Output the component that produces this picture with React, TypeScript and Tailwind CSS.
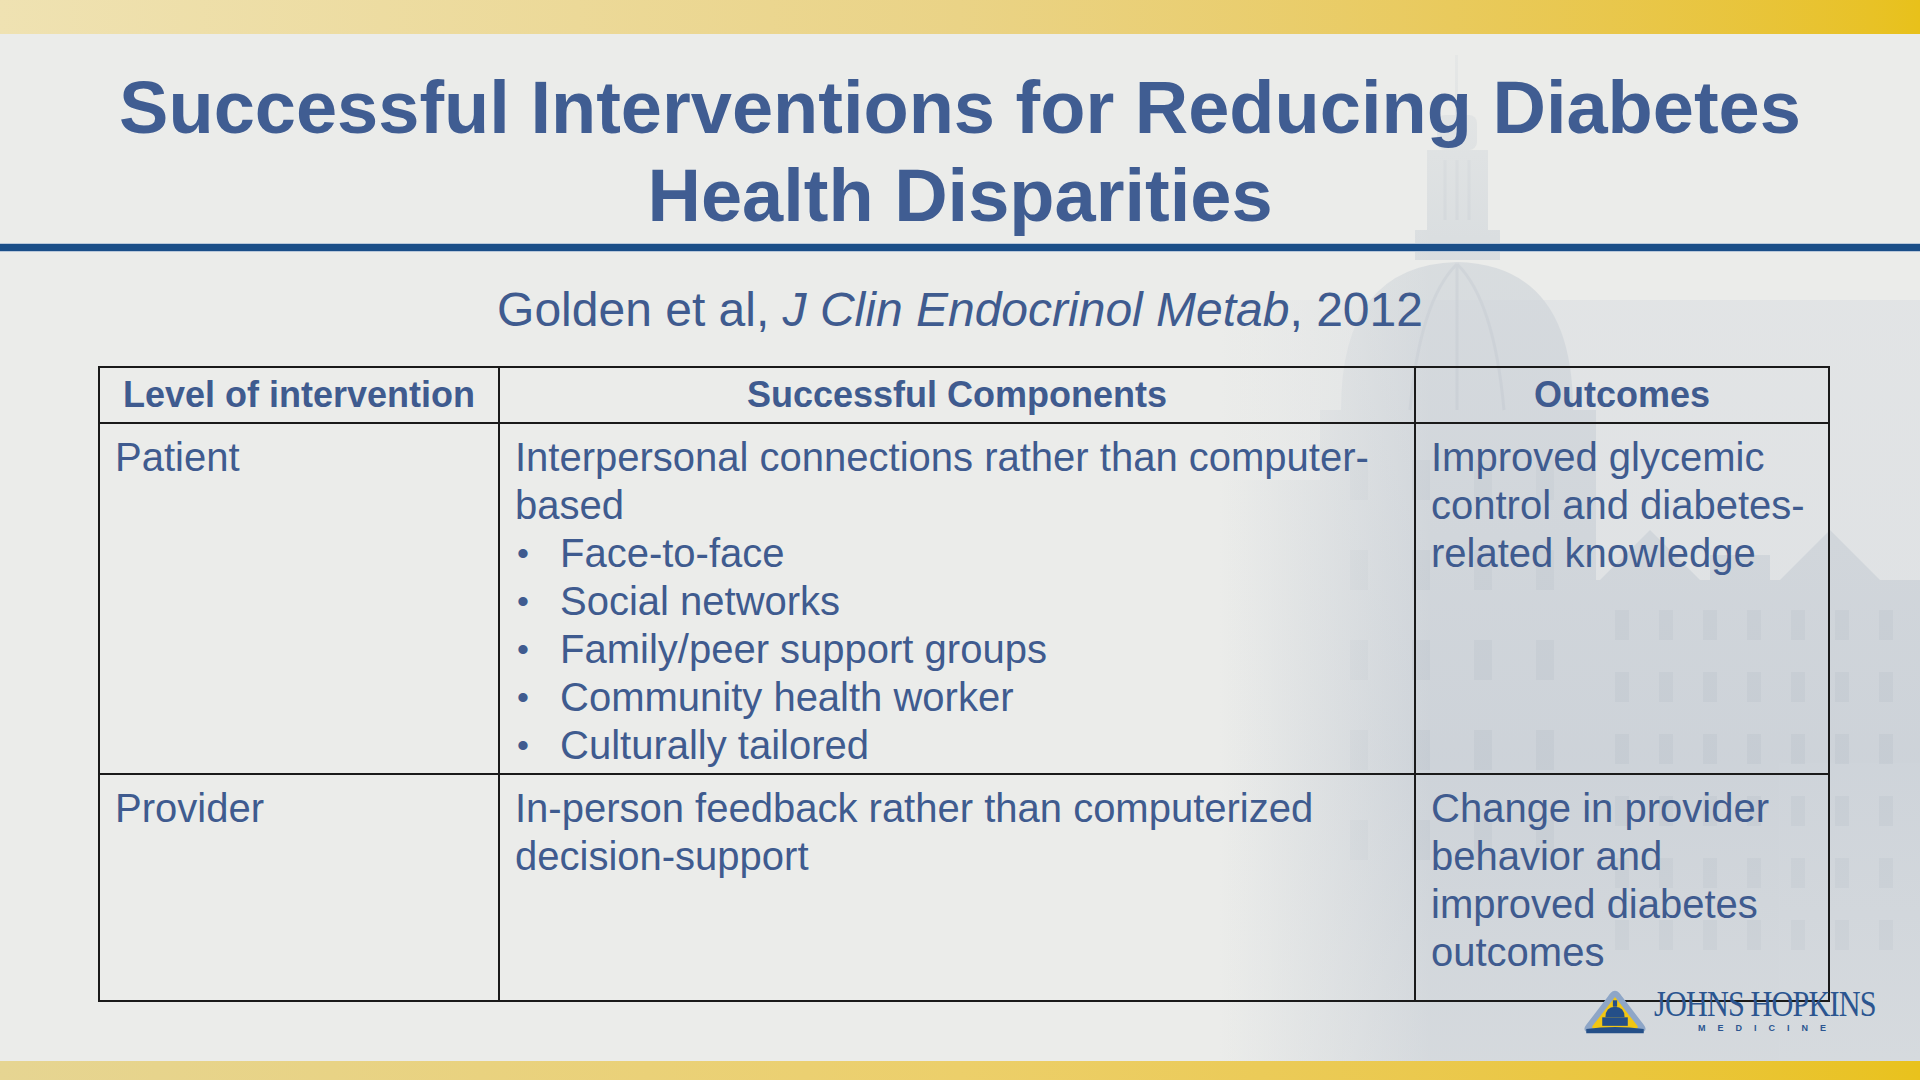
import React from "react";

// Slide: diabetes health disparities interventions table

const Building = () => (
  <svg
    className="absolute right-0 top-0 pointer-events-none"
    width="700"
    height="1080"
    viewBox="0 0 700 1080"
  >
    <defs>
      <linearGradient id="fadeL" x1="0" y1="0" x2="1" y2="0">
        <stop offset="0" stopColor="#ebecea" stopOpacity="1" />
        <stop offset="0.3" stopColor="#ebecea" stopOpacity="0" />
      </linearGradient>
      <linearGradient id="fadeT" x1="0" y1="0" x2="0" y2="1">
        <stop offset="0" stopColor="#ebecea" stopOpacity="0.9" />
        <stop offset="0.25" stopColor="#ebecea" stopOpacity="0.35" />
        <stop offset="0.7" stopColor="#ebecea" stopOpacity="0.1" />
        <stop offset="1" stopColor="#ebecea" stopOpacity="0.35" />
      </linearGradient>
    </defs>
    <rect x="0" y="300" width="700" height="780" fill="#d3d8de" opacity="0.6" />
    <g fill="#c3cad3" opacity="0.7">
      {/* spire + cupola */}
      <rect x="235" y="55" width="3" height="60" />
      <rect x="217" y="115" width="40" height="35" rx="8" />
      <rect x="207" y="150" width="61" height="80" />
      <rect x="195" y="230" width="85" height="30" />
      {/* dome */}
      <path d="M121 410 Q121 265 237 262 Q353 265 353 410 Z" />
      <rect x="100" y="410" width="276" height="670" />
      {/* low left wing */}
      <rect x="0" y="480" width="110" height="600" />
      {/* right wing */}
      <rect x="376" y="580" width="324" height="500" />
      <path d="M380 580 L430 530 L480 580 Z" />
      <path d="M560 580 L610 530 L660 580 Z" />
      <rect x="490" y="555" width="60" height="25" />
    </g>
    <g fill="none" stroke="#b6bec9" strokeWidth="3" opacity="0.5">
      <path d="M237 264 Q200 300 190 410" />
      <path d="M237 264 Q274 300 284 410" />
      <path d="M237 264 L237 410" />
      <path d="M225 160 v60 M237 160 v60 M249 160 v60" />
    </g>
    <g fill="#b8c0ca" opacity="0.4">
      {[0, 1, 2, 3, 4, 5].map((r) =>
        [0, 1, 2, 3, 4, 5, 6].map((c) => (
          <rect
            key={`${r}-${c}`}
            x={395 + c * 44}
            y={610 + r * 62}
            width="14"
            height="30"
          />
        ))
      )}
      {[0, 1, 2, 3, 4].map((r) =>
        [0, 1, 2, 3].map((c) => (
          <rect
            key={`d${r}-${c}`}
            x={130 + c * 62}
            y={460 + r * 90}
            width="18"
            height="40"
          />
        ))
      )}
    </g>
    <rect x="0" y="0" width="700" height="1080" fill="url(#fadeL)" />
    <rect x="0" y="0" width="700" height="1080" fill="url(#fadeT)" />
  </svg>
);

const Logo = () => (
  <div className="absolute left-[1582px] top-[988px] flex items-start gap-[6px]">
    <svg width="66" height="48" viewBox="0 0 62 44">
      <path
        d="M31 2 C28 2 26 5 24 8 L4 34 C1 38 2 41 7 41 L55 41 C60 41 61 38 58 34 L38 8 C36 5 34 2 31 2 Z"
        fill="#8ea6c7"
      />
      <path
        d="M31 8 L10 35 C9 37 10 38 12 38 L50 38 C52 38 53 37 52 35 Z"
        fill="#f1c613"
      />
      <path d="M29 11 h4 v6 h-4 z" fill="#244f88" />
      <path d="M22 27 Q22 17 31 17 Q40 17 40 27 Z" fill="#244f88" />
      <rect x="19" y="27" width="24" height="8" fill="#244f88" />
      <path d="M4 38 Q31 34 58 38 L58 42 L4 42 Z" fill="#244f88" />
    </svg>
    <div className="flex flex-col">
      <div className="text-[36px] leading-[32px] text-[#2b5590] font-['Liberation_Serif',serif] scale-x-[0.84] origin-left whitespace-nowrap tracking-[-1px]">
        JOHNS HOPKINS
      </div>
      <div className="ml-[44px] mt-[4px] text-[9px] leading-[9px] font-bold text-[#2b5590] tracking-[12px] font-['Liberation_Sans',sans-serif]">
        MEDICINE
      </div>
    </div>
  </div>
);

const bullets = [
  "Face-to-face",
  "Social networks",
  "Family/peer support groups",
  "Community health worker",
  "Culturally tailored",
];

const cell =
  "border-[2px] border-[#1a1a1a] align-top px-[15px] pt-[9px] whitespace-nowrap";
const head =
  "border-[2px] border-[#1a1a1a] text-[36px] font-bold leading-[40px] text-center";

export default function App() {
  return (
    <div className="relative w-[1920px] h-[1080px] overflow-hidden bg-[#ebecea] font-['Liberation_Sans',Arial,sans-serif] text-[#3f5b8f]">
      <Building />
      <div className="relative flex flex-col h-full">
        <div className="h-[34px] shrink-0 bg-gradient-to-r from-[#efe2b2] via-[#ead386] to-[#e8c11a]" />

        <h1 className="pt-[30px] text-center font-bold text-[74px] leading-[88px] text-[#405d92] whitespace-nowrap">
          Successful Interventions for Reducing Diabetes
          <br />
          Health Disparities
        </h1>

        <div className="mt-[3px] h-[9px] shrink-0 border-y border-[#b9c8da] bg-[#1a4e88]" />

        <p className="mt-[30px] text-center text-[48px] leading-[56px]">
          Golden et al, <i>J Clin Endocrinol Metab</i>, 2012
        </p>

        <div className="mt-[28px] ml-[98px] w-[1730px]">
          <table className="w-full border-collapse table-fixed text-[40px] leading-[48px]">
            <colgroup>
              <col className="w-[400px]" />
              <col className="w-[916px]" />
              <col className="w-[414px]" />
            </colgroup>
            <thead>
              <tr className="h-[56px]">
                <th className={head}>Level of intervention</th>
                <th className={head}>Successful Components</th>
                <th className={head}>Outcomes</th>
              </tr>
            </thead>
            <tbody>
              <tr className="h-[351px]">
                <td className={cell}>Patient</td>
                <td className={cell}>
                  <div>Interpersonal connections rather than computer-</div>
                  <div>based</div>
                  <ul>
                    {bullets.map((b) => (
                      <li key={b} className="flex">
                        <span className="w-[45px] pl-[2px] shrink-0 text-[34px]">•</span>
                        <span>{b}</span>
                      </li>
                    ))}
                  </ul>
                </td>
                <td className={cell}>
                  Improved glycemic
                  <br />
                  control and diabetes-
                  <br />
                  related knowledge
                </td>
              </tr>
              <tr className="h-[227px]">
                <td className={cell}>Provider</td>
                <td className={cell}>
                  In-person feedback rather than computerized
                  <br />
                  decision-support
                </td>
                <td className={cell}>
                  Change in provider
                  <br />
                  behavior and
                  <br />
                  improved diabetes
                  <br />
                  outcomes
                </td>
              </tr>
            </tbody>
          </table>
        </div>

        <div className="mt-auto h-[19px] shrink-0 bg-gradient-to-r from-[#e6d592] via-[#eccf6a] to-[#e9c21c]" />
      </div>
      <Logo />
    </div>
  );
}
